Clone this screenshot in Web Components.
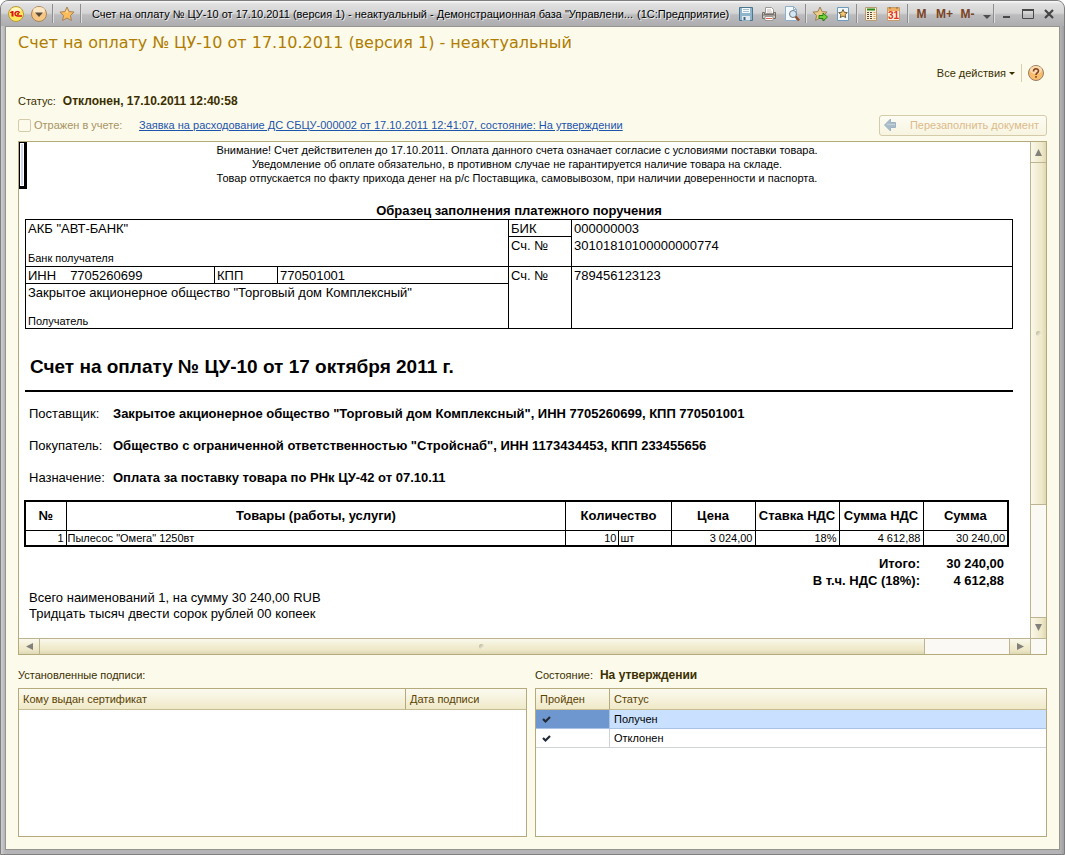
<!DOCTYPE html>
<html lang="ru">
<head>
<meta charset="utf-8">
<title>Счет на оплату № ЦУ-10</title>
<style>
  html, body { margin: 0; }
  body { font: 11px/14px "Liberation Sans", Arial, sans-serif; color: #3b2f00; background: #fff; }
</style>
</head>
<body>
<app-window>
  <title-bar slot="bar"></title-bar>
  <form-header></form-header>
  <doc-view><payment-invoice></payment-invoice></doc-view>
  <list-area></list-area>
</app-window>

<script>
const define = (name, html) => {
  const tpl = document.createElement('template');
  tpl.innerHTML = html;
  customElements.define(name, class extends HTMLElement {
    constructor() {
      super();
      this.attachShadow({ mode: 'open' }).append(tpl.content.cloneNode(true));
    }
  });
};

/* ---------- icons ---------- */
const STAR = 'M8 1l2.1 4.6 5 .5-3.700 3.400 1.100 5L8 12l-4.500 2.500 1.100-5L.9 6.100l5-.5z';
const ICONS = {
  logo: `<circle cx="8" cy="8" r="7.500" fill="#ffe65a" stroke="#b59a3c"/><ellipse cx="8" cy="4" rx="5" ry="2.500" fill="#fff6c0"/>
    <path d="M2 6.500L4 5h1.500v5.500H3.500V7H2z" fill="#d8141c"/><path d="M11.500 7C11 5 7 5 7 7.700s3 2.300 7 2.300M11 8H9" fill="none" stroke="#d8141c" stroke-width="1.400"/>`,
  menu: `<circle cx="8" cy="8" r="7.500" fill="#f7c684" stroke="#a8865a"/><ellipse cx="8" cy="4.500" rx="6" ry="3.500" fill="#fce6c4"/><path d="M4 6.500h8L8 11z" fill="#5a4a3c"/>`,
  star: `<path d="${STAR}" fill="#fbbd5c" stroke="#a8835a"/><path d="M8 3.500l1.200 3H6.800z" fill="#ffe3a8"/>`,
  save: `<path d="M1.500 1.500h13v13h-13z" fill="#8fb4cc" stroke="#4b7690"/><path d="M4 2h8v5H4z" fill="#f4f9fc"/><path d="M5 3.500h6M5 5.500h6" stroke="#a9c3d2"/><path d="M4 10h8v4.500H4z" fill="#dfeaf0"/><path d="M5.500 11h2v3h-2z" fill="#41677d"/>`,
  print: `<path d="M4.500 1.500h6l2 2v4h-8z" fill="#fff" stroke="#999"/><path d="M1.500 6.500h2v2h9v-2h2v6h-13z" fill="#cfc9c2" stroke="#756c66"/><path d="M2 9h12" stroke="#77706a"/><path d="M4 10.500h8v4H4z" fill="#fff" stroke="#999"/><path d="M5 12.500h6" stroke="#db6b50"/><path d="M6 4h4M6 6h5" stroke="#c9b9ae"/>`,
  preview: `<path d="M1.500 .5h8l3 3v11h-11z" fill="#f3f9fe" stroke="#8eb0cb"/><path d="M9.500.5v3h3" fill="none" stroke="#8eb0cb"/><circle cx="9" cy="8" r="3.500" fill="#d3e8f4" stroke="#6e7983"/><path d="M11.500 10.500l3.500 4" stroke="#96512e" stroke-width="2.500"/>`,
  favadd: `<path d="${STAR}" fill="#edca86" stroke="#9b815b"/><path d="M7 9.500h4V7l4.500 4L11 15v-2.500H7z" fill="#73d03b" stroke="#26820e"/>`,
  favlist: `<path d="M2.500 1.500h11v13h-11z" fill="#f1f8fd" stroke="#6f9bbb"/><path d="M8 3.500l1.300 2.800 3 .3-2.200 2 .6 3L8 10l-2.700 1.600.6-3-2.200-2 3-.3z" fill="#f6c86c" stroke="#705c3d"/>`,
  calc: `<path d="M2.500 1.500h11v13h-11z" fill="#fbefd6" stroke="#b89b72"/><path d="M4 2.500h8v2H4z" fill="#2b8b20"/><path d="M4 6.500h6M4 8.500h6M4 10.500h6M4 12.500h6" stroke="#5b4a3b" stroke-dasharray="2 1"/><path d="M10.500 6.500h2M10.500 8.500h2M10.500 10.500h2M10.500 12.500h2" stroke="#e0a050"/>`,
  calendar: `<path d="M1.500 1.500h12v13h-12z" fill="#fdf0dc" stroke="#c49f6d"/><path d="M2 2h11v3H2z" fill="#eeb060"/><path d="M4 1v2M11 1v2" stroke="#8c6535"/><text x="7.500" y="13" text-anchor="middle" font-family="Liberation Sans" font-size="10" fill="#e5301f">31</text>`,
  down: `<path d="M4 9h8l-4 4z" fill="#4d4d4d"/>`,
  min: `<path d="M4 11h7" stroke="#484848" stroke-width="2"/>`,
  max: `<path d="M2.500 3.500h11v9h-11z" fill="none" stroke="#484848"/><path d="M2 4h12" stroke="#484848" stroke-width="2"/>`,
  close: `<path d="M4 4l8 8M12 4l-8 8" stroke="#444" stroke-width="2.200"/>`,
  help: `<circle cx="8" cy="8" r="7.500" fill="#f8bd6c" stroke="#9b7b62"/><ellipse cx="8" cy="5" rx="6" ry="4" fill="#fbdcae"/><path d="M5.500 6.500C5.500 3 10.500 3 10.500 6 10.500 8 8 7.500 8 10M8 11v1.700" fill="none" stroke="#874021" stroke-width="1.600"/>`,
  back: `<path d="M1.500 8l6-6v3.500h5v5h-5V14z" fill="#a9bdc9" stroke="#9db3c3"/><path d="M4 7.500h8" stroke="#c5d2da"/>`,
  check: `<path d="M4 8l2.500 2.500 4.500-4.500" fill="none" stroke="#222a35" stroke-width="2.200"/>`,
};
customElements.define('ui-icon', class extends HTMLElement {
  constructor() {
    super();
    this.attachShadow({ mode: 'open' }).innerHTML =
      `<style>:host{display:block;width:16px;height:16px;flex:none}svg{display:block}</style>
       <svg width="16" height="16" viewBox="0 0 16 16" aria-hidden="true">${ICONS[this.getAttribute('name')]}</svg>`;
  }
});

/* ---------- window frame ---------- */
define('app-window', `<style>
  :host { display: flex; flex-direction: column; box-sizing: border-box; min-height: 100vh; border: 1px solid #7f7f7f;
    border-radius: 8px 8px 0 0; padding: 0 4px 4px; background: linear-gradient(90deg, #cfcfcf, #b4b3b6 4px, #b4b3b6 calc(100% - 4px), #a0a0a3); }
  main { flex: 1; display: flex; flex-direction: column; border: 1px solid #96948f; background: #fcfaeb; padding: 0 12px 12px; }
  ::slotted([slot=bar]) { margin: 0 -4px; }
</style>
<slot name="bar"></slot><main><slot></slot></main>`);

define('title-bar', `<style>
  :host { display: flex; align-items: center; height: 25px; padding: 0 5px 0 3px; color: #000; border-radius: 7px 7px 0 0;
    background: linear-gradient(#fafafa, #e0e0e0 3px, #d4d4d5 12px, #bcbcbe 14px, #adadb0); }
  button { display: grid; place-items: center; width: 23px; height: 23px; padding: 0; border: 0; background: none; flex: none;
    font: bold 12px/16px "Liberation Sans", sans-serif; color: #7c4322; }
  button.w { width: 21px; }
  button.n { width: 12px; }
  i { flex: none; width: 1px; height: 19px; margin: 0 2px; background: #8e8e90; box-shadow: 1px 0 #dedede; }
  .t { flex: 1; min-width: 0; display: flex; gap: 4px; padding-left: 9px; white-space: nowrap; overflow: hidden; text-shadow: 1px 1px #eee; }
</style>
<button aria-label="Меню"><ui-icon name="logo"></ui-icon></button>
<button aria-label="Сервис"><ui-icon name="menu"></ui-icon></button><i></i>
<button aria-label="Избранное"><ui-icon name="star"></ui-icon></button><i></i>
<div class="t"><span>Счет на оплату № ЦУ-10 от 17.10.2011 (версия 1) - неактуальный - Демонстрационная база "Управлени...</span><span>(1С:Предприятие)</span></div>
<button aria-label="Сохранить"><ui-icon name="save"></ui-icon></button>
<button aria-label="Печать"><ui-icon name="print"></ui-icon></button>
<button aria-label="Просмотр"><ui-icon name="preview"></ui-icon></button><i></i>
<button aria-label="Добавить в избранное"><ui-icon name="favadd"></ui-icon></button>
<button aria-label="Список избранного"><ui-icon name="favlist"></ui-icon></button><i></i>
<button aria-label="Калькулятор"><ui-icon name="calc"></ui-icon></button>
<button aria-label="Календарь"><ui-icon name="calendar"></ui-icon></button><i></i>
<button>M</button><button>M+</button><button>M-</button>
<button class="n" aria-label="Еще"><ui-icon name="down"></ui-icon></button><i></i>
<button class="w" aria-label="Свернуть"><ui-icon name="min"></ui-icon></button>
<button class="w" aria-label="Развернуть"><ui-icon name="max"></ui-icon></button>
<button class="w" aria-label="Закрыть"><ui-icon name="close"></ui-icon></button>`);

/* ---------- form header ---------- */
define('form-header', `<style>
  :host { display: block; }
  h1 { margin: 0; padding-top: 4px; font: 16px/24px "DejaVu Sans", sans-serif; color: #b07d00; white-space: nowrap; }
  div { display: flex; align-items: center; }
  .a { justify-content: flex-end; height: 24px; margin-top: 6px; gap: 6px; padding-right: 3px; }
  .a button { display: flex; align-items: center; gap: 3px; border: 0; padding: 0; background: none; font: inherit; color: inherit; }
  .a i { width: 1px; height: 18px; background: #d6cfae; }
  .a b { border: 3px solid transparent; border-top-color: #3b2f00; border-bottom: 0; }
  .s { gap: 7px; height: 20px; margin-top: 6px; }
  .s strong { font-size: 12px; }
  .r { height: 22px; margin: 3px 0 5px; }
  label { display: flex; align-items: center; gap: 3px; width: 121px; color: #a89464; }
  input { appearance: none; box-sizing: border-box; width: 13px; height: 13px; margin: 0; border: 1px solid #d3cba9; border-radius: 2px; background: #fcfaeb; }
  a { color: #1d55ad; }
  .r button { display: flex; align-items: center; gap: 11px; height: 21px; margin-left: auto; padding: 0 7px 0 3px; border: 1px solid #d3cba9;
    border-radius: 3px; background: linear-gradient(#fdfcf3, #f7f4e0); font: inherit; color: #dcbb8c; }
</style>
<h1>Счет на оплату № ЦУ-10 от 17.10.2011 (версия 1) - неактуальный</h1>
<div class="a"><button>Все действия <b></b></button><i></i><button aria-label="Справка"><ui-icon name="help"></ui-icon></button></div>
<div class="s"><span>Статус:</span><strong>Отклонен, 17.10.2011 12:40:58</strong></div>
<div class="r"><label><input type="checkbox" disabled>Отражен в учете:</label>
<a href="#">Заявка на расходование ДС СБЦУ-000002 от 17.10.2011 12:41:07, состояние: На утверждении</a>
<button disabled><ui-icon name="back"></ui-icon>Перезаполнить документ</button></div>`);

/* ---------- document area ---------- */
define('scroll-bar', `<style>
  :host { display: flex; background: #faf9f3; --g: linear-gradient(90deg, #f9f8ec, #f1ecd0 50%, #efe9ca 70%, #ded8b4); }
  :host([vertical]) { flex-direction: column; width: 15px; border-left: 1px solid #bdb592; }
  :host(:not([vertical])) { height: 15px; border-top: 1px solid #bdb592; --g: linear-gradient(#f9f8ec, #f1ecd0 50%, #efe9ca 70%, #ded8b4); }
  button { flex: 0 0 20px; display: grid; place-items: center; padding: 0; border: 0; background: var(--g); }
  .m { display: grid; place-items: center; background: var(--g); box-shadow: 0 0 0 1px #bdb592; }
  .m::after { content: ""; width: 5px; height: 5px; border-radius: 3px; background: linear-gradient(135deg, #b0ab8c, #fffdf0); }
  :host([vertical]) .m { flex: 341; margin-top: 1px; }
  :host([vertical]) .e { flex: 113; }
  :host(:not([vertical])) .m { flex: 883; margin-left: 1px; }
  :host(:not([vertical])) .e { flex: 86; }
  button:last-child { box-shadow: 0 0 0 1px #bdb592; }
  svg { display: block; opacity: .8; }
  button:first-child svg { opacity: .3; }
  :host(:not([vertical])) svg { transform: rotate(-90deg); }
</style>
<button aria-label="Назад"><svg width="7" height="7"><path d="M0 7h7L3.500 0z" fill="#666"/></svg></button>
<div class="m"></div><div class="e"></div>
<button aria-label="Вперед"><svg width="7" height="7"><path d="M0 0h7L3.500 7z" fill="#666"/></svg></button>`);

define('doc-view', `<style>
  :host { display: grid; grid-template-columns: minmax(0, 1fr) auto; border: 1px solid #b4aa7c; background: #fff; }
  .p { position: relative; }
  .cell { position: absolute; left: 0; top: 0; box-sizing: border-box; width: 8px; height: 47px; border: solid #000; border-width: 1px 3px 3px 1px; padding: 1px;
    background: linear-gradient(#cfd5f2, #cfd5f2) content-box, #fff; }
  .c { border: solid #bdb592; border-width: 1px 0 0 1px; background: #faf9f3; }
  scroll-bar { overflow: hidden; }
</style>
<div class="p"><slot></slot><span class="cell"></span></div><scroll-bar vertical></scroll-bar>
<scroll-bar></scroll-bar><div class="c"></div>`);

define('payment-invoice', `<style>
  :host { display: block; padding: 1px 17px 16px 6px; color: #000; }
  h2 { margin: 18px 0 0; font-size: 13px; line-height: 16px; text-align: center; }
  h3 { margin: 25px 0 0; padding: 0 5px 10px; border-bottom: 2px solid; font-size: 19px; line-height: 26px; }
  dl { display: grid; grid-template-columns: 84px 1fr; row-gap: 16px; margin: 14px 4px; font-size: 13px; line-height: 16px; }
  dd { margin: 0; font-weight: bold; }
  p { margin: 1px 4px 0; font-size: 13px; line-height: 16px; }
  .n { margin: 0; text-align: center; padding-right: 4px; font-size: 11px; line-height: 14px; }
</style>
<p class="n">Внимание! Счет действителен до 17.10.2011. Оплата данного счета означает согласие с условиями поставки товара.<br>Уведомление об оплате обязательно, в противном случае не гарантируется наличие товара на складе.<br>Товар отпускается по факту прихода денег на р/с Поставщика, самовывозом, при наличии доверенности и паспорта.</p>
<h2>Образец заполнения платежного поручения</h2>
<bank-details></bank-details>
<h3>Счет на оплату № ЦУ-10 от 17 октября 2011 г.</h3>
<dl><dt>Поставщик:</dt><dd>Закрытое акционерное общество "Торговый дом Комплексный", ИНН 7705260699, КПП 770501001</dd>
<dt>Покупатель:</dt><dd>Общество с ограниченной ответственностью "Стройснаб", ИНН 1173434453, КПП 233455656</dd>
<dt>Назначение:</dt><dd>Оплата за поставку товара по РНк ЦУ-42 от 07.10.11</dd></dl>
<goods-table></goods-table>
<p>Всего наименований 1, на сумму 30 240,00 RUB<br>Тридцать тысяч двести сорок рублей 00 копеек</p>`);

define('bank-details', `<style>
  :host { display: block; }
  table { width: 100%; table-layout: fixed; border-collapse: collapse; font-size: 13px; line-height: 15px; }
  td { padding: 1px 2px 0; border: 1px solid #000; vertical-align: top; height: 15px; }
  td.x { border-bottom: 0; } td.y { border-top: 0; height: 28px; }
  small { display: block; font-size: 11px; line-height: 14px; padding-top: 15px; }
  td.l small { padding-top: 14px; } span { margin-left: 14px; }
</style>
<table><colgroup><col style="width:189px"><col style="width:63px"><col style="width:231px"><col style="width:63px"><col></colgroup>
<tr><td colspan="3" rowspan="2">АКБ "АВТ-БАНК"<small>Банк получателя</small></td><td>БИК</td><td class="x">000000003</td></tr>
<tr><td>Сч. №</td><td class="y">30101810100000000774</td></tr>
<tr><td>ИНН<span>7705260699</span></td><td>КПП</td><td>770501001</td><td rowspan="2">Сч. №</td><td rowspan="2">789456123123</td></tr>
<tr><td colspan="3" class="l">Закрытое акционерное общество "Торговый дом Комплексный"<small>Получатель</small></td></tr></table>`);

define('goods-table', `<style>
  :host { display: block; margin: 0 4px 0 -1px; }
  table { width: 100%; table-layout: fixed; border-collapse: collapse; }
  .g { border: 2px solid #000; }
  .g th, .g td { border: 1px solid #000; padding: 0 2px; white-space: nowrap; }
  .g th { height: 28px; font-size: 13px; padding: 0; }
  td { height: 14px; text-align: right; }
  .g td.l { text-align: left; padding-left: 1px; }
  .t { font-size: 13px; line-height: 17px; font-weight: bold; margin-top: 8px; }
  .t td { padding: 0 5px 0 0; height: 17px; }
</style>
<table class="g"><colgroup><col style="width:41px"><col><col style="width:53px"><col style="width:52px"><col style="width:84px"><col style="width:84px"><col style="width:84px"><col style="width:85px"></colgroup>
<tr><th>№</th><th>Товары (работы, услуги)</th><th colspan="2">Количество</th><th>Цена</th><th>Ставка НДС</th><th>Сумма НДС</th><th>Сумма</th></tr>
<tr><td>1</td><td class="l">Пылесос "Омега" 1250вт</td><td>10</td><td class="l">шт</td><td>3 024,00</td><td>18%</td><td>4 612,88</td><td>30 240,00</td></tr></table>
<table class="t"><colgroup><col><col style="width:84px"></colgroup>
<tr><td>Итого:</td><td>30 240,00</td></tr><tr><td>В т.ч. НДС (18%):</td><td>4 612,88</td></tr></table>`);

/* ---------- lower lists ---------- */
define('list-area', `<style>
  :host { flex: 1; display: grid; grid-template-columns: 509fr 512fr; gap: 8px; padding-top: 13px; }
  strong { font-size: 12px; }
</style>
<list-panel>
  <span slot="cap">Установленные подписи:</span>
  <sign-list></sign-list>
</list-panel>
<list-panel>
  <span slot="cap">Состояние:</span><strong slot="cap">На утверждении</strong>
  <state-list></state-list>
</list-panel>`);

define('list-panel', `<style>
  :host { display: flex; flex-direction: column; min-height: 140px; }
  .c { display: flex; gap: 7px; height: 20px; line-height: 14px; }
  .b { flex: 1; border: 1px solid #b4aa7c; background: #fff; }
</style><div class="c"><slot name="cap"></slot></div><div class="b"><slot></slot></div>`);

const LIST_CSS = `
  :host { display: block; }
  table { width: 100%; table-layout: fixed; border-collapse: separate; border-spacing: 0; }
  th { height: 20px; padding: 0 4px; text-align: left; font-weight: normal; color: #5a4300;
    background: linear-gradient(#fbfaf0, #f0e9c8); border-bottom: 1px solid #c6bd95; }
  th + th { border-left: 1px solid #b4aa7c; }
  td { height: 17px; padding: 1px 4px 0; color: #000; border-bottom: 1px solid #cfd3d8; }
  td + td { border-left: 1px solid #cfd3d8; }
  td ui-icon { margin-left: -1px; }
  tr.on td { background: #c9e1ff; border-color: #a9c3e6; }
  tr.on td:first-child { background: #6f97cf; }
`;
define('sign-list', `<style>${LIST_CSS}</style>
<table><colgroup><col><col style="width:121px"></colgroup><tr><th>Кому выдан сертификат</th><th>Дата подписи</th></tr></table>`);
define('state-list', `<style>${LIST_CSS}</style>
<table><colgroup><col style="width:73px"><col></colgroup><tr><th>Пройден</th><th>Статус</th></tr>
<tr class="on"><td><ui-icon name="check"></ui-icon></td><td>Получен</td></tr>
<tr><td><ui-icon name="check"></ui-icon></td><td>Отклонен</td></tr></table>`);
</script>
</body>
</html>
